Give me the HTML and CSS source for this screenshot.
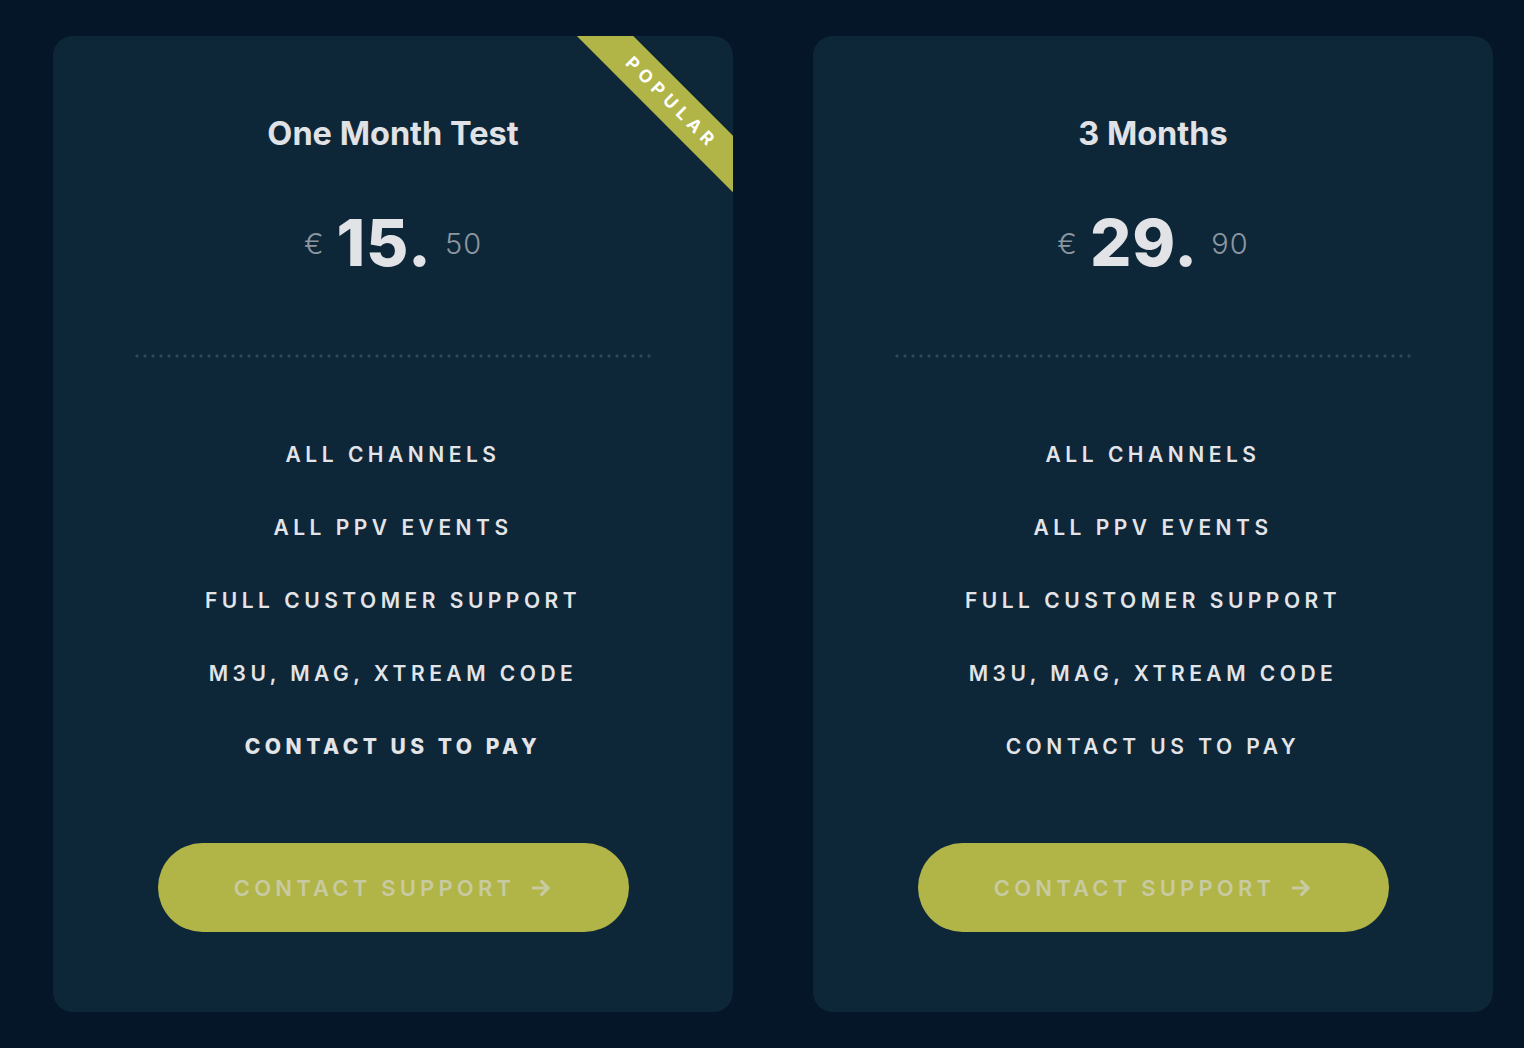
FILE: index.html
```html
<!DOCTYPE html>
<html lang="en">
<head>
<meta charset="utf-8">
<title>Pricing</title>
<link rel="stylesheet" href="styles.css">
</head>
<body>
<main class="plans">
  <section class="card">
    <div class="ribbon">POPULAR</div>
    <h2 class="title">One Month Test</h2>
    <div class="price">
      <span class="cur">€</span><span class="amount">15.</span><span class="cents">50</span>
    </div>
    <div class="divider"></div>
    <ul class="features">
      <li>All Channels</li>
      <li>All PPV Events</li>
      <li>Full Customer Support</li>
      <li>M3U, MAG, Xtream Code</li>
      <li class="strong">Contact us to pay</li>
    </ul>
    <a class="btn" href="#">Contact Support
      <svg class="arrow" viewBox="0 0 20 20" width="22" height="22"><path d="M3 10h13M10.5 4l6 6-6 6" fill="none" stroke="currentColor" stroke-width="2.8" stroke-linecap="round" stroke-linejoin="round"/></svg>
    </a>
  </section>
  <section class="card">
    <h2 class="title">3 Months</h2>
    <div class="price">
      <span class="cur">€</span><span class="amount">29.</span><span class="cents">90</span>
    </div>
    <div class="divider"></div>
    <ul class="features">
      <li>All Channels</li>
      <li>All PPV Events</li>
      <li>Full Customer Support</li>
      <li>M3U, MAG, Xtream Code</li>
      <li>Contact us to pay</li>
    </ul>
    <a class="btn" href="#">Contact Support
      <svg class="arrow" viewBox="0 0 20 20" width="22" height="22"><path d="M3 10h13M10.5 4l6 6-6 6" fill="none" stroke="currentColor" stroke-width="2.8" stroke-linecap="round" stroke-linejoin="round"/></svg>
    </a>
  </section>
</main>
</body>
</html>
```
FILE: styles.css
```css
* { box-sizing: border-box; }
html, body { margin: 0; }
body {
  background: #061629;
  font-family: Inter, "Noto Sans", "Liberation Sans", sans-serif;
  color: #e2e3e7;
  width: 1524px;
  height: 1048px;
  overflow: hidden;
}
.plans {
  display: flex;
  gap: 80px;
  padding: 36px 0 0 53px;
}
.card {
  position: relative;
  overflow: hidden;
  width: 680px;
  height: 976px;
  background: #0d2739;
  border-radius: 20px;
  display: flex;
  flex-direction: column;
  align-items: center;
  padding: 78px 0 80px;
}
.ribbon {
  position: absolute;
  top: 44px;
  right: -46px;
  width: 220px;
  height: 40px;
  line-height: 40px;
  background: #b1b447;
  color: #fff;
  font-size: 17.5px;
  font-weight: 700;
  letter-spacing: 5.5px;
  text-align: center;
  transform: rotate(45deg);
  padding-left: 8px;
}
.title {
  margin: 0;
  font-size: 32.5px;
  line-height: 40px;
  font-weight: 700;
  color: #e1e2e6;
}
.price {
  margin-top: 49px;
  height: 80px;
  line-height: 80px;
  white-space: nowrap;
}
.cur, .cents {
  display: inline-block;
  font-weight: 300;
  color: #8c97a1;
  vertical-align: 12px;
}
.cur { font-size: 29px; margin-right: 13px; }
.cents { font-size: 29px; margin-left: 13px; letter-spacing: 1px; }
.amount {
  font-size: 65px;
  font-weight: 800;
  color: #e2e3e7;
  letter-spacing: 1px;
}
.divider {
  margin-top: 71px;
  width: 520px;
  height: 4px;
  background-image: radial-gradient(circle at center, #2c4656 1.4px, transparent 1.8px);
  background-size: 8px 4px;
}
.features {
  list-style: none;
  margin: 59.5px 0 0;
  padding: 0;
  text-align: center;
}
.features li {
  height: 73px;
  line-height: 73px;
  text-transform: uppercase;
  font-size: 21px;
  font-weight: 600;
  letter-spacing: 4.5px;
  color: #e3e4e8;
}
.features li.strong {
  font-weight: 800;
  letter-spacing: 4.5px;
}
.btn {
  margin-top: 60.5px;
  width: 471px;
  height: 89px;
  border-radius: 45px;
  background: #b1b447;
  color: #c8caa1;
  text-decoration: none;
  text-transform: uppercase;
  display: flex;
  align-items: center;
  justify-content: center;
  gap: 15px;
  font-size: 22px;
  font-weight: 600;
  letter-spacing: 4.2px;
}
.arrow { display: block; }
```
